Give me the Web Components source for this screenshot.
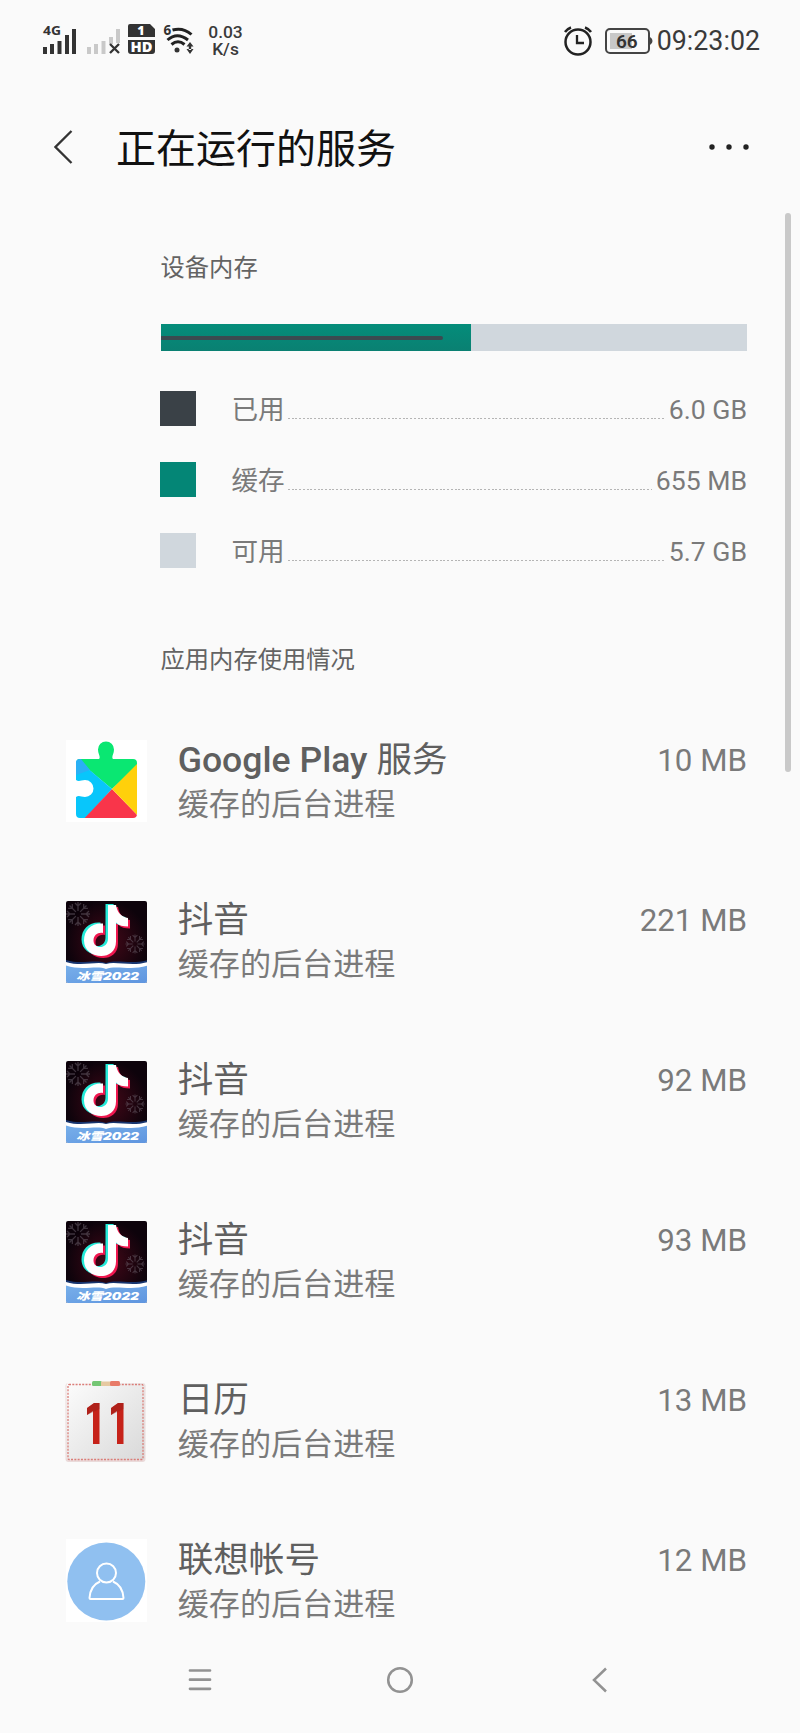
<!DOCTYPE html>
<html lang="zh-CN">
<head>
<meta charset="utf-8">
<title>正在运行的服务</title>
<style>
html,body{margin:0;height:100%;background:#fafafa}
body{font-family:Roboto,"Noto Sans CJK SC",sans-serif;color:#7a7a7a;overflow:hidden}
</style>
</head>
<body>
<phone-screen>
  <status-bar slot="status" speed="0.03" battery="66" time="09:23:02"></status-bar>
  <app-bar slot="bar">正在运行的服务</app-bar>
  <section-title style="--h:56px">设备内存</section-title>
  <memory-bar></memory-bar>
  <memory-row color="#3a4147" label="已用">6.0 GB</memory-row>
  <memory-row color="#048676" label="缓存">655 MB</memory-row>
  <memory-row color="#d0d7dd" label="可用">5.7 GB</memory-row>
  <section-title style="--h:116px;--top:31px">应用内存使用情况</section-title>
  <process-row icon="play" size="10 MB"><b>Google Play</b> 服务</process-row>
  <process-row icon="douyin" size="221 MB">抖音</process-row>
  <process-row icon="douyin" size="92 MB">抖音</process-row>
  <process-row icon="douyin" size="93 MB">抖音</process-row>
  <process-row icon="calendar" size="13 MB">日历</process-row>
  <process-row icon="account" size="12 MB">联想帐号</process-row>
  <nav-bar slot="nav"></nav-bar>
</phone-screen>
<script>
const define = (name, render) => customElements.define(name, class extends HTMLElement {
  constructor(){ super(); this.attachShadow({mode:'open'}); }
  connectedCallback(){ this.shadowRoot.innerHTML = render(this); }
});

define('app-icon', el => {
  const flake = (x,y,s) => `<g transform="translate(${x} ${y}) scale(${s})" stroke="#6f6470" stroke-width="1.3" fill="none" opacity=".5">${
    [0,45,90,135,180,225,270,315].map(a=>`<path transform="rotate(${a})" d="M0-3V-12M-3-11L0-8L3-11"/>`).join('')}</g>`;
  const note = 'M42 4h8c1 7 5 12 12 13v8.500c-5 0-9-1-12-4v19c0 21-32 18-32-1 0-11 8-18 19-17v9.500c-5-1-9.500 2-9.500 7.500 0 9 14.500 9 14.500-2z';
  const icons = {
    play: `<rect width="81" height="82" y="-1" fill="#fff"/>
      <clipPath id="p"><path d="M14 18H33C35 16 32 13 32 8.500a8 8 0 0 1 16 0c0 4.500-3 7.500-1 9.500H67q4 0 4 4V73q0 4-4 4H14q-4 0-4-4V56c3-2 5 0 9 0a8.500 8.500 0 0 0 0-17c-4 0-6 2-9 0V22q0-4 4-4Z"/></clipPath>
      <g clip-path="url(#p)"><path d="M0 0h82v15L46 48 10 18z" fill="#0ae772"/><path d="M0 9L46 48 17 80H0z" fill="#08c6fb"/><path d="M0 9L15 18 24 29 10 34z" fill="#2ab0f5"/><path d="M14 82L46 48 79 82z" fill="#f9354a"/><path d="M46 48L82 12V85z" fill="#ffd00b"/></g>`,
    douyin: `<defs><clipPath id="d"><rect width="81" height="82" rx="2"/></clipPath>
      <linearGradient id="b" x1="0" x2="1" y2="1"><stop stop-color="#77afea"/><stop offset="1" stop-color="#5f95df"/></linearGradient>
      <radialGradient id="r"><stop stop-color="#450818"/><stop offset="1" stop-color="#0d030b"/></radialGradient></defs>
      <g clip-path="url(#d)"><rect width="82" height="82" fill="url(#r)"/>
      ${flake(12,13,1)}${flake(69,43,.8)}
      <path d="${note}" fill="#ef174f" transform="translate(2 2)"/><path d="${note}" fill="#26ead9" transform="translate(-2.500 -1)"/><path d="${note}" fill="#fff"/>
      <path d="M0 59C16 64 28 58 40 62 52 58 65 64 82 59V82H0z" fill="#17346e"/>
      <path d="M0 61C16 66 30 60 40 63 50 60 66 66 82 61V82H0z" fill="#fff"/>
      <path d="M0 64.500C16 70 31 64 40 68 50 64 66 70 82 64.500V82H0z" fill="url(#b)"/>
      <text x="10" y="79" textLength="63" lengthAdjust="spacingAndGlyphs" font-family="Inter,'Noto Sans CJK SC',sans-serif" font-size="10.500" font-style="italic" font-weight="900" fill="#fff">冰雪2022</text></g>`,
    calendar: `<defs><linearGradient id="c" x2="1" y2="1"><stop stop-color="#fcfcfc"/><stop offset="1" stop-color="#d9d9d9"/></linearGradient></defs>
      <rect x="-.5" y="2" width="80" height="79" rx="3" fill="#eadada"/><rect x=".5" y="2" width="78" height="77" rx="2" fill="url(#c)"/>
      <rect x="2" y="3.500" width="75" height="75" rx="1" fill="none" stroke="#db7d78" stroke-width="1.300" stroke-dasharray="2 1.300"/>
      <rect x="26" y="0" width="10" height="5" rx="1.500" fill="#74c674"/><path d="M35 .5h10v4.500H35z" fill="#e6c9a1"/><rect x="44" y="0" width="10" height="5" rx="1.500" fill="#e87b68"/>
      <g fill="#c62219"><path d="M28 22h5.500v41H27V30l-6 4v-7zM52 22h5.500v41H51V30l-6 4v-7z"/></g><path d="M28 22h5.500v6L21 34v-7zM52 22h5.500v6L45 34v-7z" fill="#8e211b" opacity=".4"/>`,
    account: `<rect y="-2" width="81" height="83" fill="#fff"/><circle cx="40.300" cy="40.500" r="39" fill="#90c0f0"/>
      <g fill="none" stroke="#fff" stroke-width="2"><circle cx="40.500" cy="32" r="9.500"/><path d="M34 40.500C28 43 24 49 23.500 57q0 1 1 1H56.500q1 0 1-1C57 49 53 43 47 40.500"/></g>`
  };
  return `<style>:host{display:block;width:82px;height:82px}svg{display:block;overflow:visible}</style><svg width="82" height="82">${icons[el.getAttribute('name')]}</svg>`;
});

define('status-bar', el => `<style>
  :host{display:flex;align-items:center;justify-content:space-between;height:82px;box-sizing:border-box;padding:0 40px 0 42px;color:#3a3a3a}
  .g{display:flex;align-items:center}svg{display:block;overflow:visible}
  .s{display:grid;grid-template-rows:17px 17px;font-size:17.400px;line-height:17px;text-align:center;font-weight:500;width:38px;margin-left:8.500px}
  .t{font-size:26.800px;line-height:30px;margin-left:5px;width:104px;text-align:right;white-space:nowrap}
  .r svg{margin-right:-1px;transform:translateX(1px)}
  </style>
  <div class="g"><svg width="156" height="34" fill="#333">
    <text x="1" y="11" font-family="Open Sans" font-weight="700" font-size="12" textLength="18" lengthAdjust="spacingAndGlyphs">4G</text>
    <path d="M1 23h4v7H1zM8 20h4v10H8zM15.500 17h4v13h-4zM23 11h4v19h-4zM30 5h4v25h-4z"/>
    <path d="M45 23h4v7h-4zM52 20h4v10h-4zM59.500 17h4v13h-4zM67 13h4v7h-4zM74 5h4v14h-4z" fill="#c9c9c9"/>
    <path d="M68 20l9 9M77 20l-9 9" stroke="#333" stroke-width="2.300"/>
    <path d="M88 0H108L113 5V13H86V2q0-2 2-2zM86 16h27v11q0 3-3 3H89q-3 0-3-3z"/>
    <g fill="#fff" font-family="Open Sans" font-weight="800" text-anchor="middle"><text x="99" y="11" font-size="12.500">1</text><text x="99.500" y="28" font-size="13.500" textLength="22" lengthAdjust="spacingAndGlyphs">HD</text></g>
    <text x="121.500" y="11" font-family="Open Sans" font-weight="700" font-size="13.500">6</text>
    <g fill="none" stroke="#222" stroke-width="3"><path d="M130.500 6Q141 3 149.500 10.500"/><path d="M125.500 16Q135 7.500 146 16"/><path d="M129.500 20.500Q136 15 142.500 20.500"/></g><circle cx="135" cy="26" r="2.500"/>
    <path d="M148 18l3.500 4.500h-7zM148 30l3.500-5h-7zM146.800 22h2.400v4h-2.400z"/>
  </svg><div class="s"><span>${el.getAttribute('speed')}</span><span>K/s</span></div></div>
  <div class="g r"><svg width="92" height="30" fill="none" stroke="#222">
    <circle cx="17" cy="16" r="12.500" stroke-width="2.500"/><path d="M16 9v8h7" stroke-width="2.300"/><path d="M4 6q2-3 6-4.500M24 1.500Q28 3 30 6" stroke-width="2.500"/>
    <rect x="45" y="3" width="43" height="24" rx="4" stroke="#444" stroke-width="2"/><path d="M89 11q2.500 1.500 2.500 4T89 19z" fill="#444" stroke="none"/>
    <rect x="49" y="7" width="22" height="16" fill="#c8c8c8" stroke="none"/>
    <text x="65.800" y="22" fill="#333" stroke="none" font-size="19" font-weight="600" text-anchor="middle">${el.getAttribute('battery')}</text>
  </svg><span class="t">${el.getAttribute('time')}</span></div>`);

define('app-bar', () => `<style>
  :host{display:flex;align-items:center;height:130px;box-sizing:border-box;padding:0 50px 0 54px;color:#111;font-size:40px;line-height:50px}
  svg{display:block}.t{flex:1;margin:5px 0 0 43px;white-space:nowrap}
  </style><svg width="19" height="34" fill="none" stroke="#333" stroke-width="2.300"><path d="M17.500 1L1.500 17 17.500 33"/></svg>
  <div class="t"><slot></slot></div><svg width="42" height="8" fill="#222"><circle cx="4" cy="4" r="2.700"/><circle cx="21" cy="4" r="2.700"/><circle cx="38" cy="4" r="2.700"/></svg>`);

define('section-title', () => `<style>:host{display:flex;flex:none;box-sizing:border-box;align-items:center;height:var(--h);padding:var(--top,0) 0 0 160.500px;font-size:24.300px;line-height:30px;color:#636363}</style><slot></slot>`);

define('memory-bar', () => `<style>
  :host{display:block;flex:none;padding:28px 53.500px 22px 161px}
  .track{height:27px;background:#d0d7dd}.cache{width:310px;height:27px;display:flex;align-items:center;background:linear-gradient(#048d7a,#0a8072)}
  .used{width:282px;height:4px;background:#3a4a50;border-radius:0 2px 2px 0}
  </style><div class="track"><div class="cache"><div class="used"></div></div></div>`);

define('memory-row', el => `<style>
  :host{display:flex;flex:none;align-items:center;height:71px;padding:0 53px 0 160px;font-size:26.600px;line-height:32px}
  i{width:35.500px;height:35.500px;background:${el.getAttribute('color')};margin-right:36px}
  span{padding-top:3px}
  .dots{flex:1;padding:0;height:1px;margin:20px 4px 0 3px;background:repeating-linear-gradient(90deg,#b5b5b5 0 2px,transparent 2px 3.700px)}
  </style><i></i><span>${el.getAttribute('label')}</span><span class="dots"></span><span><slot></slot></span>`);

define('process-row', el => `<style>
  :host{display:grid;grid-template-columns:82px 1fr auto;column-gap:29.700px;height:160px;flex:none;box-sizing:border-box;padding:39px 53px 0 66px}
  .txt{display:flex;flex-direction:column;white-space:nowrap}
  .n{font-size:35.600px;line-height:44px;height:44px;color:#5f5f5f;margin-top:-3px}
  .s{font-size:31.100px;line-height:44px;height:44px;margin-top:1px}
  .v{font-size:31.300px;line-height:40px}
  ::slotted(b){font-weight:500}
  </style><app-icon name="${el.getAttribute('icon')}"></app-icon>
  <div class="txt"><div class="n"><slot></slot></div><div class="s">缓存的后台进程</div></div>
  <div class="v">${el.getAttribute('size')}</div>`);

define('nav-bar', () => `<style>
  :host{display:grid;grid-template-columns:repeat(3,200px);justify-content:center;align-items:center;justify-items:center;height:107px;background:#fafafa}
  svg{display:block}</style>
  <svg width="24" height="24" fill="none" stroke="#929292" stroke-width="2.700" stroke-linecap="round"><path d="M2 2.500H22M2 11.700H22M2 20.800H22"/></svg>
  <svg width="28" height="28" fill="none" stroke="#929292" stroke-width="2.500"><circle cx="14" cy="14" r="11.800"/></svg>
  <svg width="16" height="26" fill="none" stroke="#929292" stroke-width="2.500"><path d="M14 1.500L2 13 14 24.500"/></svg>`);

define('phone-screen', () => `<style>
  :host{display:flex;flex-direction:column;height:1733px;width:800px;position:relative;background:#fafafa}
  main{flex:1;min-height:0;overflow:hidden;display:flex;flex-direction:column;padding-top:28px;box-sizing:border-box}
  .bar{position:absolute;right:9px;top:213px;width:6.500px;height:559px;border-radius:4px;background:#c9c9c9}
  </style><slot name="status"></slot><slot name="bar"></slot><main><slot></slot></main><slot name="nav"></slot><div class="bar"></div>`);
</script>
</body>
</html>
